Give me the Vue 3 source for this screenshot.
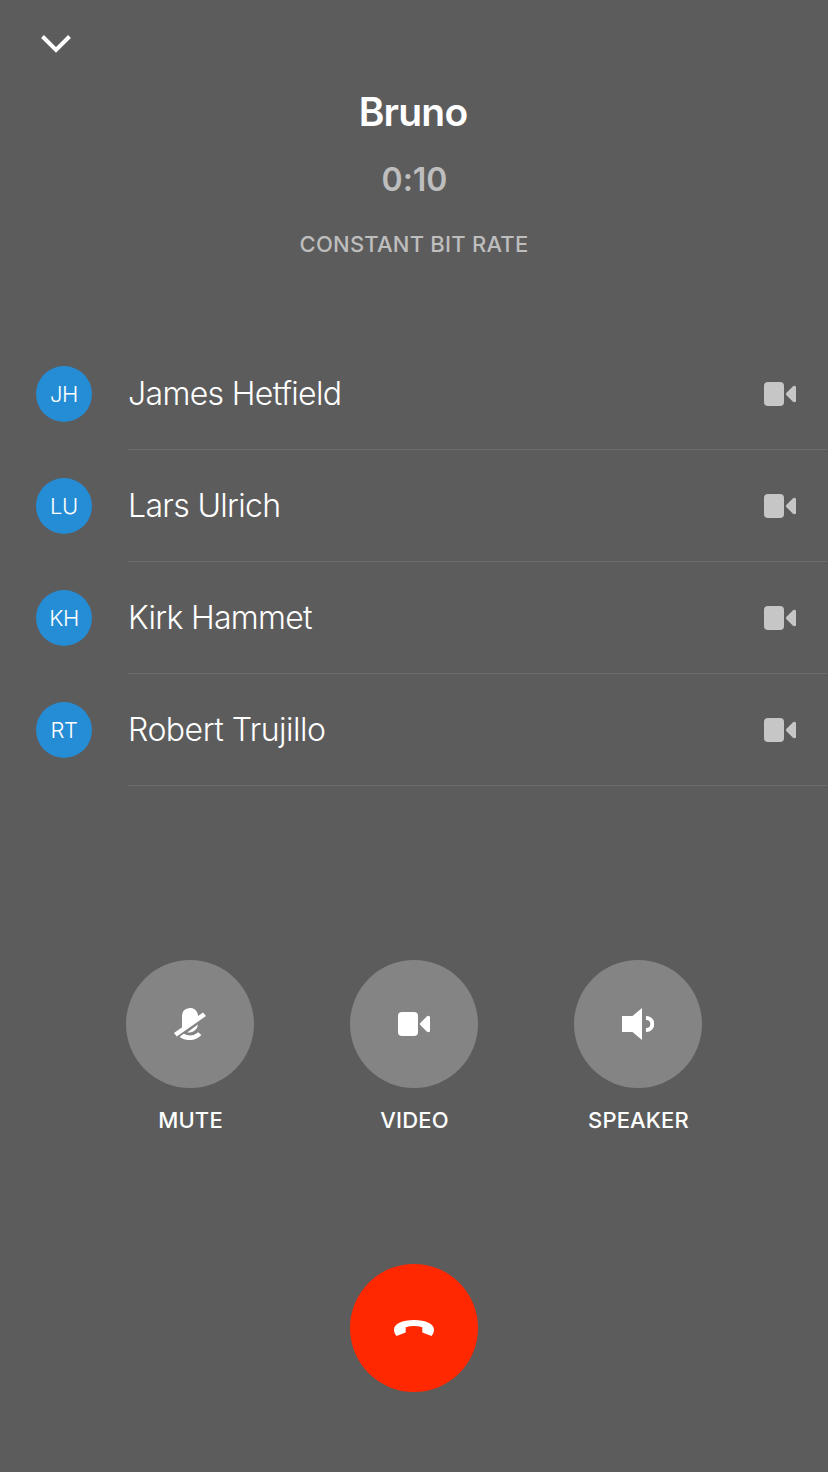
<script setup>
const participants = [
  { initials: 'JH', name: 'James Hetfield', cls: 'n1' },
  { initials: 'LU', name: 'Lars Ulrich', cls: 'n2' },
  { initials: 'KH', name: 'Kirk Hammet', cls: 'n3' },
  { initials: 'RT', name: 'Robert Trujillo', cls: 'n4' },
]
</script>

<template>
  <main class="call">
    <button class="collapse" aria-label="Minimize">
      <svg width="32" height="20" viewBox="0 0 32 20"><path d="M2.500 2.500 16 16 29.500 2.500" fill="none" stroke="#fff" stroke-width="4" /></svg>
    </button>
    <header class="head">
      <h1>Bruno</h1>
      <p class="time">0:10</p>
      <p class="rate">CONSTANT BIT RATE</p>
    </header>
    <ul class="people">
      <li v-for="p in participants" :key="p.initials">
        <span class="avatar">{{ p.initials }}</span>
        <div class="row">
          <span class="name" :class="p.cls">{{ p.name }}</span>
          <svg class="cam" width="32" height="24" viewBox="0 0 32 24"><rect width="20" height="24" rx="4" /><path d="M22.500 10.700 29 4.300Q30 3.700 31 3.900 32 4.100 32 5.300V18.700Q32 19.900 31 20.100 30 20.300 29 19.700L22.500 13.300Q21.200 12 22.500 10.700Z" /></svg>
        </div>
      </li>
    </ul>
    <section class="controls">
      <div class="control">
        <button class="round" aria-label="Mute">
          <svg width="32" height="32" viewBox="0 0 32 32" fill="#fff">
            <path d="M8 22V8A8 8 0 0 1 23.200 4.600L24 7V9Z" />
            <path d="M0 25 29 4.400 32 8 2.700 28.600Z" />
            <path d="M24 16.600A8.600 8.600 0 0 1 13.400 24.200Z" />
            <path d="M9.800 25.800Q17.300 30 24.300 24.300L27.400 27Q18 35.800 6.200 29.500V28.300Z" />
          </svg>
        </button>
        <span class="label">MUTE</span>
      </div>
      <div class="control">
        <button class="round" aria-label="Video">
          <svg width="32" height="24" viewBox="0 0 32 24" fill="#fff"><rect width="20" height="24" rx="4" /><path d="M22.500 10.700 29 4.300Q30 3.700 31 3.900 32 4.100 32 5.300V18.700Q32 19.900 31 20.100 30 20.300 29 19.700L22.500 13.300Q21.200 12 22.500 10.700Z" /></svg>
        </button>
        <span class="label">VIDEO</span>
      </div>
      <div class="control">
        <button class="round" aria-label="Speaker">
          <svg width="32" height="32" viewBox="0 0 32 32"><path d="M0 8H10.500L20 0V32L10.500 24H0Z" fill="#fff" /><path d="M24 10H24.300A6 6 0 0 1 24.300 22H24" fill="none" stroke="#fff" stroke-width="4" /></svg>
        </button>
        <span class="label">SPEAKER</span>
      </div>
    </section>
    <button class="round end" aria-label="End call">
      <svg width="40" height="16" viewBox="0 0 40 16"><path d="M0 9.500C0 4 8 0 20 0S40 4 40 9.500C40 12 39.200 14 37.500 16L28.300 12.500V7.200Q20 4.800 11.700 7.200V12.500L2.500 16C.8 14 0 12 0 9.500Z" fill="#fff" /></svg>
    </button>
  </main>
</template>

<style>
html, body { background: #5c5c5c; }
</style>

<style scoped>
.call {
  box-sizing: border-box;
  height: 1472px;
  padding-top: 34px;
  background: #5c5c5c;
  color: #fff;
  font-family: Inter, "Liberation Sans", sans-serif;
  font-variant-ligatures: none;
  display: flex;
  flex-direction: column;
  overflow: hidden;
}
button { border: 0; padding: 0; background: none; }
svg { display: block; flex: none; }
.collapse { width: 32px; height: 20px; margin-left: 40px; }
.head { height: 284px; text-align: center; }
h1, p { margin: 0; white-space: nowrap; }
h1 { margin-top: 34px; padding-right: 2px; font-size: 39px; line-height: 48px; font-weight: 600; letter-spacing: -0.8px; }
.time { margin-top: 24px; padding-left: 1px; font-size: 32px; line-height: 40px; font-weight: 600; color: #bebebe; }
.rate { margin-top: 30px; font-size: 22px; line-height: 28px; font-weight: 550; color: #bebebe; letter-spacing: 0.22px; }
.people { list-style: none; margin: 0; padding: 0; }
.people li { display: flex; align-items: center; height: 112px; padding-left: 36px; }
.avatar {
  width: 56px; height: 56px; margin-right: 36px; border-radius: 50%;
  background: #258dd5; text-align: center; font-size: 22px; line-height: 56px; font-weight: 300;
  letter-spacing: -0.4px;
}
.row {
  box-sizing: border-box; height: 112px; flex: 1; display: flex; align-items: center;
  justify-content: space-between; padding-right: 32px; border-bottom: 1px solid #6b6b6b;
}
.name { padding-top: 1px; font-size: 32px; line-height: 40px; font-weight: 300; white-space: nowrap; }
.n1 { letter-spacing: -0.65px; }
.n2 { letter-spacing: -0.65px; }
.n3 { letter-spacing: -0.7px; }
.n4 { letter-spacing: -0.5px; }
.cam { fill: #c6c6c6; }
.controls { display: flex; justify-content: center; gap: 96px; margin-top: 174px; }
.control { width: 128px; display: flex; flex-direction: column; align-items: center; }
.round {
  width: 128px; height: 128px; border-radius: 50%; background: #848484;
  display: flex; align-items: center; justify-content: center; flex: none;
}
.label { margin-top: 18px; padding-left: 1px; font-size: 22px; line-height: 28px; font-weight: 550; letter-spacing: 0.15px; white-space: nowrap; }
.end { background: #ff2800; margin: 130px auto 0; }
</style>
